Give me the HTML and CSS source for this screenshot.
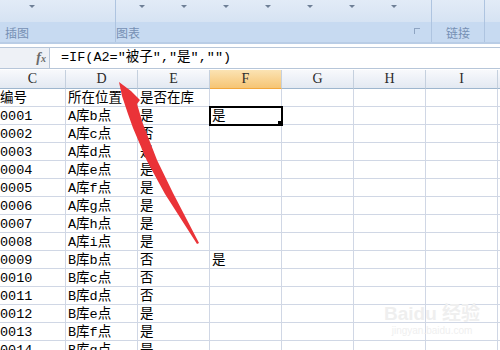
FILE: index.html
```html
<!DOCTYPE html>
<html lang="zh-CN">
<head>
  <meta charset="UTF-8" />
  <title>Excel IF</title>
  <link rel="stylesheet" href="styles.css">
</head>
<body>

  <div class="ribbon">
    <div class="group g-pic">
      <div class="drops"><span class="tri"></span></div>
      <div class="label">插图</div>
    </div>
    <div class="group g-chart">
      <div class="drops">
        <span class="tri"></span><span class="tri"></span><span class="tri"></span>
        <span class="tri"></span><span class="tri"></span><span class="tri"></span>
        <span class="tri"></span>
      </div>
      <div class="label">图表<span class="launcher"></span></div>
    </div>
    <div class="group g-link">
      <div class="drops"></div>
      <div class="label">链接</div>
    </div>
    <div class="group g-rest">
      <div class="drops"></div>
      <div class="label"></div>
    </div>
  </div>

  <div class="fbar">
    <div class="fx">f<sub>x</sub></div>
    <div class="formula">=IF(A2="被子","是","")</div>
  </div>

  <div class="sheet">
    <div class="hd">C</div><div class="hd">D</div><div class="hd">E</div><div class="hd active">F</div>
    <div class="hd">G</div><div class="hd">H</div><div class="hd">I</div><div class="hd"></div>

    <div class="c first">编号</div><div class="c">所在位置</div><div class="c">是否在库</div><div class="c"></div>
    <div class="c"></div><div class="c"></div><div class="c"></div><div class="c"></div>

    <div class="c first">0001</div><div class="c">A库b点</div><div class="c">是</div><div class="c sel">是</div>
    <div class="c"></div><div class="c"></div><div class="c"></div><div class="c"></div>

    <div class="c first">0002</div><div class="c">A库c点</div><div class="c">否</div><div class="c"></div>
    <div class="c"></div><div class="c"></div><div class="c"></div><div class="c"></div>

    <div class="c first">0003</div><div class="c">A库d点</div><div class="c">是</div><div class="c"></div>
    <div class="c"></div><div class="c"></div><div class="c"></div><div class="c"></div>

    <div class="c first">0004</div><div class="c">A库e点</div><div class="c">是</div><div class="c"></div>
    <div class="c"></div><div class="c"></div><div class="c"></div><div class="c"></div>

    <div class="c first">0005</div><div class="c">A库f点</div><div class="c">是</div><div class="c"></div>
    <div class="c"></div><div class="c"></div><div class="c"></div><div class="c"></div>

    <div class="c first">0006</div><div class="c">A库g点</div><div class="c">是</div><div class="c"></div>
    <div class="c"></div><div class="c"></div><div class="c"></div><div class="c"></div>

    <div class="c first">0007</div><div class="c">A库h点</div><div class="c">是</div><div class="c"></div>
    <div class="c"></div><div class="c"></div><div class="c"></div><div class="c"></div>

    <div class="c first">0008</div><div class="c">A库i点</div><div class="c">是</div><div class="c"></div>
    <div class="c"></div><div class="c"></div><div class="c"></div><div class="c"></div>

    <div class="c first">0009</div><div class="c">B库b点</div><div class="c">否</div><div class="c">是</div>
    <div class="c"></div><div class="c"></div><div class="c"></div><div class="c"></div>

    <div class="c first">0010</div><div class="c">B库c点</div><div class="c">否</div><div class="c"></div>
    <div class="c"></div><div class="c"></div><div class="c"></div><div class="c"></div>

    <div class="c first">0011</div><div class="c">B库d点</div><div class="c">否</div><div class="c"></div>
    <div class="c"></div><div class="c"></div><div class="c"></div><div class="c"></div>

    <div class="c first">0012</div><div class="c">B库e点</div><div class="c">是</div><div class="c"></div>
    <div class="c"></div><div class="c"></div><div class="c"></div><div class="c"></div>

    <div class="c first">0013</div><div class="c">B库f点</div><div class="c">是</div><div class="c"></div>
    <div class="c"></div><div class="c"></div><div class="c"></div><div class="c"></div>

    <div class="c first">0014</div><div class="c">B库g点</div><div class="c">是</div><div class="c"></div>
    <div class="c"></div><div class="c"></div><div class="c"></div><div class="c"></div>
  </div>

  <!-- red pointer drawn over the sheet -->
  <svg class="arrow" width="500" height="350" viewBox="0 0 500 350">
    <polygon fill="#ea3338" points="119,82 131,91 140,100 137,104 143,124 157,160 173,193 199,243 197,244 165,194 147,161 133,128 128,114 122,96"/>
  </svg>

  <div class="watermark">
    <div class="wm-big">Bai<span>du</span> 经验</div>
    <div class="wm-small">jingyan.baidu.com</div>
  </div>

</body>
</html>
```

FILE: styles.css
```css
body {
  margin: 0;
  width: 500px;
  height: 350px;
  overflow: hidden;
  background: #fff;
  font-family: "Liberation Mono", "Noto Sans CJK SC", monospace;
  font-size: 13.5px;
  color: #000;
}

/* ribbon */
.ribbon {
  display: flex;
  height: 42px;
  background: #dce7f5;
  border-bottom: 2px solid #b9cde6;
}

.group {
  display: flex;
  flex-direction: column;
  border-right: 1px solid #aec4e0;
  box-shadow: inset -2px 0 0 #eef4fb;
}

.g-pic { width: 115px; }
.g-chart { width: 315px; }
.g-link { width: 52px; }
.g-rest { flex: 1; border-right: none; }

.drops {
  height: 22px;
  display: flex;
  background: linear-gradient(#e2ebf7, #d6e3f3);
}

.g-pic .drops { padding-left: 29px; }
.g-chart .drops { padding-left: 23px; gap: 36px; }

.tri {
  width: 0;
  height: 0;
  margin-top: 5px;
  border-left: 3px solid transparent;
  border-right: 3px solid transparent;
  border-top: 3px solid #6e7f96;
}

.label {
  flex: 1;
  display: flex;
  align-items: center;
  padding-left: 5px;
  background: #c7daf1;
  color: #7690b4;
  font-family: "Noto Sans CJK SC", sans-serif;
  font-size: 12px;
  position: relative;
}

.g-chart .label { padding-left: 0; }
.g-link .label { justify-content: center; padding-left: 0; }

.launcher {
  position: absolute;
  right: 11px;
  top: 6px;
  width: 5px;
  height: 5px;
  border: 1px solid #8ea4c2;
  border-width: 1px 0 0 1px;
}

/* formula bar */
.fbar {
  display: flex;
  height: 20px;
  margin-top: 3px;
  border-top: 1px solid #b7c6d9;
  border-bottom: 1px solid #b7c6d9;
}

.fx {
  width: 50px;
  padding-right: 3px;
  box-sizing: border-box;
  text-align: right;
  background: #eef1f6;
  border-right: 1px solid #b7c6d9;
  font-family: "Liberation Serif", serif;
  font-style: italic;
  font-weight: bold;
  font-size: 14px;
  color: #6a6a6a;
  line-height: 20px;
}

.fx sub {
  font-size: 10px;
  vertical-align: 0;
}

.formula {
  flex: 1;
  padding-left: 11px;
  line-height: 20px;
  white-space: nowrap;
}

/* sheet grid */
.sheet {
  display: grid;
  grid-template-columns: 66px repeat(6, 72px) 1fr;
  grid-template-rows: 19px;
  grid-auto-rows: 18px;
  margin-top: 1px;
}

.hd {
  box-sizing: border-box;
  text-align: center;
  line-height: 18px;
  font-family: "Liberation Serif", serif;
  font-size: 14px;
  color: #2b2b2b;
  background: linear-gradient(#f8f9fc, #e3e9f2);
  border-right: 1px solid #c5d0de;
  border-bottom: 1px solid #9eb6ce;
}

.hd.active {
  background: linear-gradient(#fbe3b3, #f6c574);
  border-bottom-color: #f2a73c;
}

.c {
  box-sizing: border-box;
  padding: 1px 0 0 2px;
  border-right: 1px solid #d0d7e5;
  border-bottom: 1px solid #d0d7e5;
  line-height: 17px;
  white-space: nowrap;
  overflow: hidden;
}

.c.first {
  padding-left: 0;
}

.c.sel {
  position: relative;
  outline: 2px solid #000;
  outline-offset: -1px;
  z-index: 1;
}

.c.sel::after {
  content: "";
  position: absolute;
  right: -3px;
  bottom: -3px;
  width: 5px;
  height: 5px;
  background: #000;
  border: 1px solid #fff;
}

.arrow {
  position: absolute;
  left: 0;
  top: 0;
  z-index: 2;
}

.watermark {
  position: absolute;
  left: 384px;
  top: 303px;
  color: #efefef;
  font-family: "Liberation Sans", "Noto Sans CJK SC", sans-serif;
  text-align: center;
}

.wm-big {
  font-size: 19px;
  font-weight: bold;
  line-height: 22px;
}

.wm-small {
  font-size: 10px;
  line-height: 12px;
}
```
